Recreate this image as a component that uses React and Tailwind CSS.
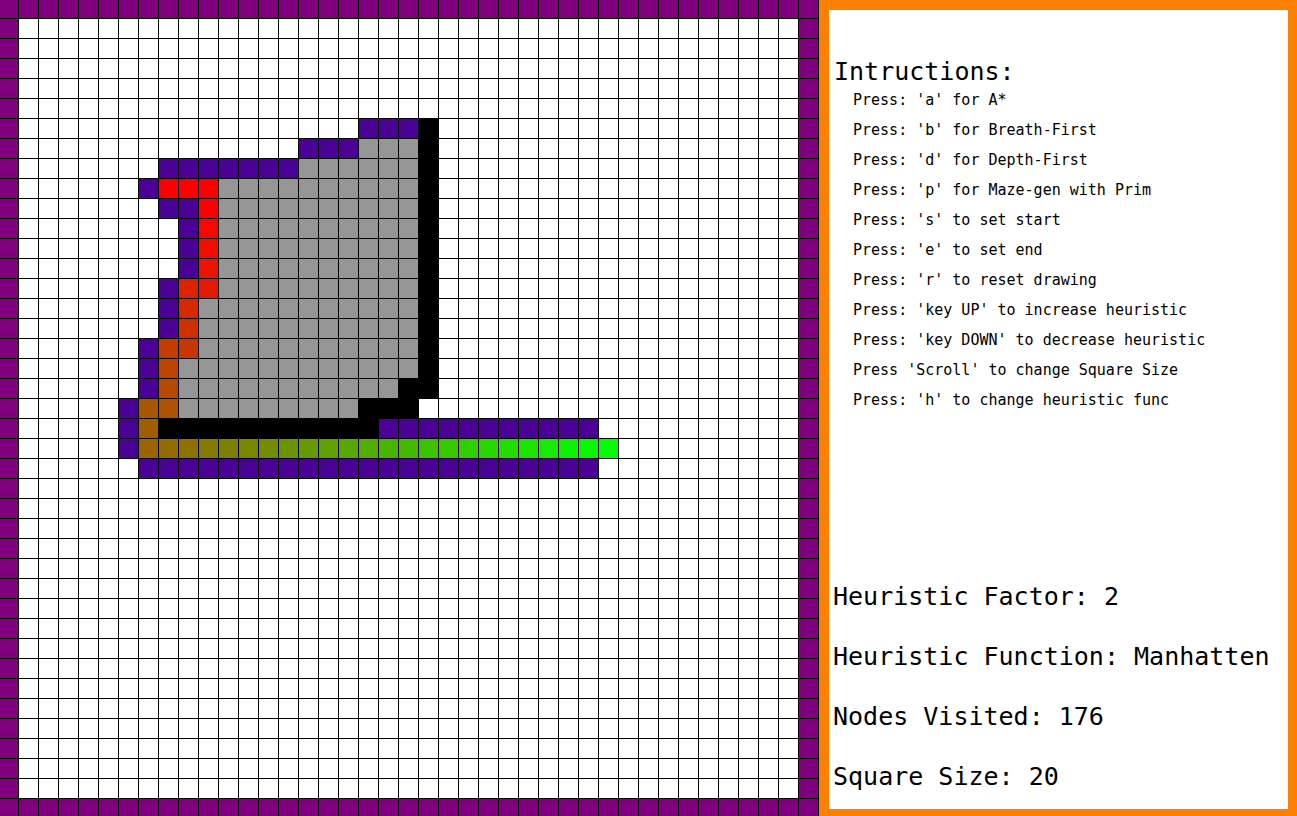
import React from 'react';

const COLS = 41;
const ROWS = 41;

const BORDER = '#800080';
const OPEN = '#4b0096';
const CLOSED = '#969696';
const WALL = '#000000';

// walls, closed set and open set as [row, fromCol, toCol]
const closedRuns = [
  [7, 18, 20], [8, 15, 20], [9, 11, 20], [10, 11, 20], [11, 11, 20], [12, 11, 20],
  [13, 11, 20], [14, 11, 20], [15, 10, 20], [16, 10, 20], [17, 10, 20], [18, 9, 20],
  [19, 9, 19], [20, 9, 17],
];

const wallRuns = [
  [6, 21, 21], [7, 21, 21], [8, 21, 21], [9, 21, 21], [10, 21, 21], [11, 21, 21],
  [12, 21, 21], [13, 21, 21], [14, 21, 21], [15, 21, 21], [16, 21, 21], [17, 21, 21],
  [18, 21, 21], [19, 20, 21], [20, 18, 20], [21, 8, 18],
];

const openRuns = [
  [6, 18, 20], [7, 15, 17], [8, 8, 14], [9, 7, 7], [10, 8, 9], [11, 9, 9], [12, 9, 9],
  [13, 9, 9], [14, 8, 8], [15, 8, 8], [16, 8, 8], [17, 7, 7], [18, 7, 7], [19, 7, 7],
  [20, 6, 6], [21, 6, 6], [21, 19, 29], [22, 6, 6], [23, 7, 29],
];

const path = [
  [9, 8], [9, 9], [9, 10], [10, 10], [11, 10], [12, 10], [13, 10], [14, 10],
  [14, 9], [15, 9], [16, 9], [17, 9], [17, 8], [18, 8], [19, 8], [20, 8],
  [20, 7], [21, 7], [22, 7],
];
for (let c = 8; c <= 30; c++) path.push([22, c]);

const buildGrid = () => {
  const grid = Array.from({ length: ROWS }, () => Array(COLS).fill('#ffffff'));
  const paint = (runs, color) => {
    runs.forEach(([r, a, b]) => {
      for (let c = a; c <= b; c++) grid[r][c] = color;
    });
  };
  paint(closedRuns, CLOSED);
  paint(wallRuns, WALL);
  paint(openRuns, OPEN);

  const last = path.length - 1;
  path.forEach(([r, c], i) => {
    const t = Math.max(0, i - 3) / (last - 3);
    const red = Math.round(255 * (1 - t));
    const green = Math.round(255 * t);
    grid[r][c] = `rgb(${red},${green},0)`;
  });

  for (let i = 0; i < COLS; i++) {
    grid[0][i] = BORDER;
    grid[ROWS - 1][i] = BORDER;
    grid[i][0] = BORDER;
    grid[i][COLS - 1] = BORDER;
  }
  return grid;
};

const instructions = [
  "Press: 'a' for A*",
  "Press: 'b' for Breath-First",
  "Press: 'd' for Depth-First",
  "Press: 'p' for Maze-gen with Prim",
  "Press: 's' to set start",
  "Press: 'e' to set end",
  "Press: 'r' to reset drawing",
  "Press: 'key UP' to increase heuristic",
  "Press: 'key DOWN' to decrease heuristic",
  "Press 'Scroll' to change Square Size",
  "Press: 'h' to change heuristic func",
];

const stats = [
  'Heuristic Factor: 2',
  'Heuristic Function: Manhatten',
  'Nodes Visited: 176',
  'Square Size: 20',
];

const App = () => {
  const grid = buildGrid();

  return (
    <div className="flex h-screen w-screen overflow-hidden bg-white">
      <div className="h-[819px] w-[819px] shrink-0 overflow-hidden bg-black">
        <div className="-ml-px -mt-px grid grid-cols-[repeat(41,19px)] grid-rows-[repeat(41,19px)] gap-px">
          {grid.flatMap((row, r) =>
            row.map((color, c) => (
              <div key={`${r}-${c}`} style={{ backgroundColor: color }} />
            ))
          )}
        </div>
      </div>

      <div className="h-[819px] w-[479px] shrink-0 border-[10px] border-[#ff8000] bg-white pl-[4px] pt-[48px] font-['DejaVu_Sans_Mono',monospace] text-black">
        <div className="pl-px text-[25px] leading-[27px] whitespace-pre">Intructions:</div>
        <div className="pl-[20px]">
          {instructions.map((line) => (
            <div key={line} className="text-[15px] leading-[30px] whitespace-pre">
              {line}
            </div>
          ))}
        </div>
        <div className="mt-[152px]">
          {stats.map((line) => (
            <div key={line} className="text-[25px] leading-[60px] whitespace-pre">
              {line}
            </div>
          ))}
        </div>
      </div>
    </div>
  );
};

export default App;
